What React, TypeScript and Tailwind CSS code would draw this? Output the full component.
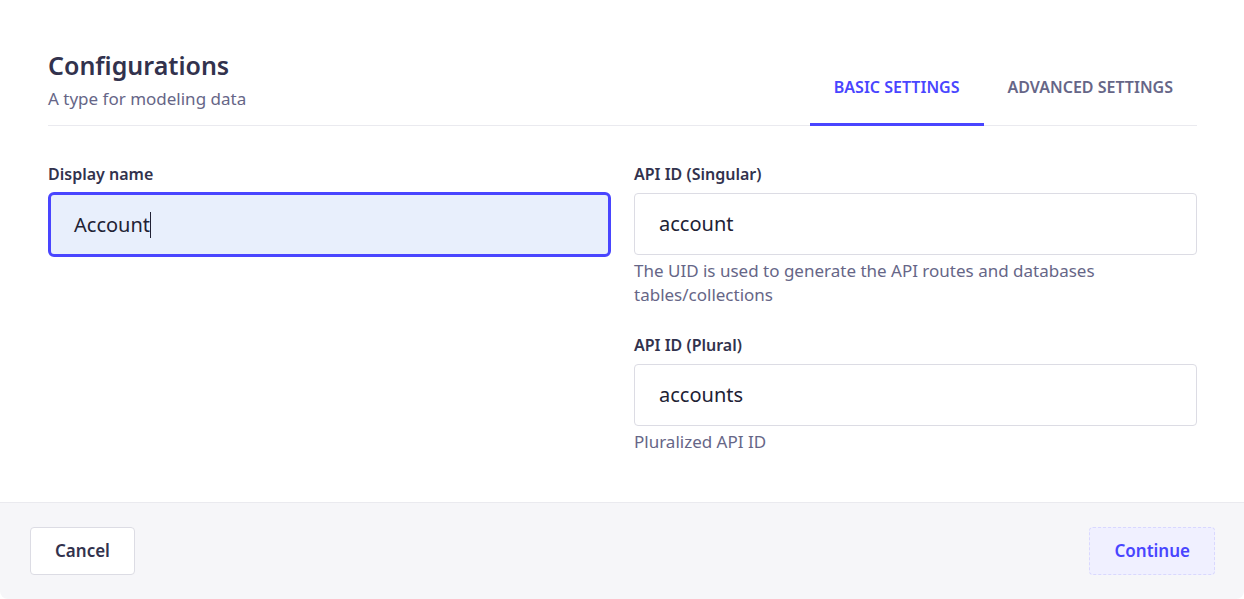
import React from 'react';

const font = { fontFamily: '"Noto Sans", "Open Sans", sans-serif' };

const Field: React.FC<{
  label: string;
  value: string;
  hint?: React.ReactNode;
  focused?: boolean;
}> = ({ label, value, hint, focused }) => (
  <div className="flex flex-col">
    <label
      className={`text-[16px] font-semibold text-[#32324d] leading-[20px] ${focused ? 'mb-[8px]' : 'mb-[9px]'}`}
    >
      {label}
    </label>
    <div
      className={
        focused
          ? 'h-[65px] rounded-[6px] border-[3px] border-[#4945ff] bg-[#e8effc] flex items-center px-[23px]'
          : 'h-[62px] rounded-[4px] border border-[#dcdce4] bg-white flex items-center px-[24px]'
      }
    >
      <span className="text-[20px] text-[#212134]">{value}</span>
      {focused && <span className="w-px h-[26px] bg-[#212134]" />}
    </div>
    {hint && <p className="mt-[4px] text-[17px] leading-[24px] text-[#666687]">{hint}</p>}
  </div>
);

export default function App() {
  return (
    <div className="w-[1244px] h-[599px] bg-white rounded-b-[8px] overflow-hidden flex flex-col" style={font}>
      <div className="flex-1 px-[48px] pr-[47px]">
        {/* header + tabs */}
        <div className="flex items-end justify-between border-b border-[#eaeaef] pt-[49px]">
          <div className="pb-[14px]">
            <h2 className="text-[25px] font-semibold text-[#32324d] leading-[32px]">Configurations</h2>
            <p className="text-[17px] text-[#666687] leading-[24px] mt-[6px]">A type for modeling data</p>
          </div>
          <div className="flex">
            <button className="px-[24px] pb-[24px] text-[16px] font-semibold text-[#4945ff] border-b-[3px] border-[#4945ff] -mb-px">
              BASIC SETTINGS
            </button>
            <button className="px-[24px] pb-[24px] text-[16px] font-semibold text-[#666687] border-b-[3px] border-transparent -mb-px">
              ADVANCED SETTINGS
            </button>
          </div>
        </div>

        {/* form */}
        <div className="grid grid-cols-2 gap-x-[23px] pt-[38px]">
          <Field label="Display name" value="Account" focused />
          <div className="flex flex-col gap-[28px]">
            <Field
              label="API ID (Singular)"
              value="account"
              hint="The UID is used to generate the API routes and databases tables/collections"
            />
            <Field label="API ID (Plural)" value="accounts" hint="Pluralized API ID" />
          </div>
        </div>
      </div>

      {/* footer */}
      <div className="h-[97px] bg-[#f6f6f9] border-t border-[#eaeaef] flex items-center justify-between px-[30px] pr-[29px]">
        <button className="h-[48px] px-[24px] rounded-[4px] border border-[#dcdce4] bg-white text-[17px] font-semibold text-[#32324d]">
          Cancel
        </button>
        <button className="h-[48px] px-[24px] rounded-[4px] border border-dashed border-[#d9d8ff] bg-[#f0f0ff] text-[17px] font-semibold text-[#4945ff]">
          Continue
        </button>
      </div>
    </div>
  );
}
